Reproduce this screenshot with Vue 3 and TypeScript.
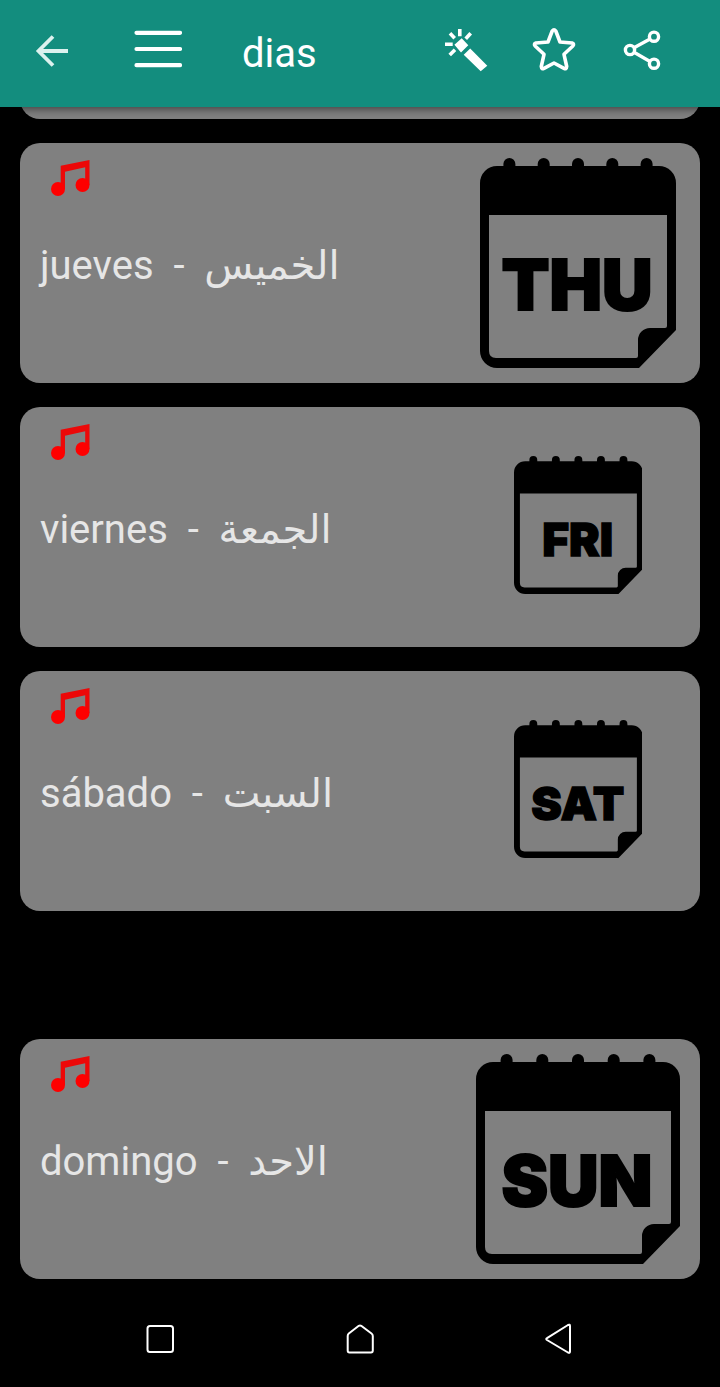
<script setup lang="ts">
interface Day {
  spanish: string
  arabic: string
  label: string
  width: number
  size: 'large' | 'small'
  lastGroup?: boolean
}

const days: Day[] = [
  { spanish: 'jueves', arabic: 'الخميس', label: 'THU', width: 196, size: 'large' },
  { spanish: 'viernes', arabic: 'الجمعة', label: 'FRI', width: 196, size: 'small' },
  { spanish: 'sábado', arabic: 'السبت', label: 'SAT', width: 196, size: 'small' },
  { spanish: 'domingo', arabic: 'الاحد', label: 'SUN', width: 204, size: 'large', lastGroup: true },
]

const rings = [0.15, 0.325, 0.5, 0.675, 0.85]

// Calendar sheet with a folded lower right corner; w is the sheet width.
function sheet(w: number): string {
  const outer = `M17 8H${w - 17}A17 17 0 0 1 ${w} 25V172L${w - 37} 210H17A17 17 0 0 1 0 193V25A17 17 0 0 1 17 8Z`
  const inner = `M9 57V193Q9 200 16 200H${w - 40}Q${w - 38} 200 ${w - 38} 198V182A12 12 0 0 1 ${w - 26} 170H${w - 11}Q${w - 9} 170 ${w - 9} 168V57Z`
  return outer + inner
}
</script>

<template>
  <div class="screen">
    <header class="bar">
      <button type="button" class="icon back" aria-label="Back">
        <svg viewBox="0 0 48 48"><path d="M25 10.500 10.500 25 25 39.500M10.500 25H40" stroke-width="3.800" /></svg>
      </button>
      <button type="button" class="icon menu" aria-label="Menu">
        <svg viewBox="0 0 48 48"><path d="M2.500 6.800H46M2.500 23H46M2.500 39.200H46" stroke-width="4.200" stroke-linecap="round" /></svg>
      </button>
      <h1 class="title">dias</h1>
      <div class="actions">
        <button type="button" class="icon" aria-label="Effects">
          <svg viewBox="0 0 48 48">
            <path d="M17.800 3V10.300M3 18.300H10.700M8 7.300 12.700 12.300M28.700 7.300 23.700 12.700M13 23.700 7.700 29" stroke-width="3.600" />
            <path class="solid" d="M19.700 12.300 26.300 19.300 19 26.600 12.400 18.700ZM28.200 22.500 45.300 39.700 38.700 45.200 21.700 28.700Z" />
          </svg>
        </button>
        <button type="button" class="icon" aria-label="Favourite">
          <svg viewBox="0 0 48 48">
            <path d="M22.200 5Q24 2.600 25.800 5L30 16 42 17Q44.800 18 42.600 20.300L34 28.300 36.700 40.500Q36.500 43.500 34 42.300L24 37 14 42.300Q11.500 43.500 11.300 40.500L14 28.300 5.400 20.300Q3.200 18 6 17L18 16Z" stroke-width="3.600" stroke-linejoin="round" />
          </svg>
        </button>
        <button type="button" class="icon" aria-label="Share">
          <svg viewBox="0 0 48 48">
            <g stroke-width="3.400">
              <circle cx="12" cy="24" r="4.600" />
              <circle cx="36" cy="10.700" r="4.600" />
              <circle cx="36" cy="37.700" r="4.600" />
              <path d="M16 21.700 32 13M16 26.300 32 35.400" />
            </g>
          </svg>
        </button>
      </div>
    </header>

    <main class="list">
      <div class="card-end" aria-hidden="true"></div>
      <article v-for="day in days" :key="day.label" class="card" :class="{ 'card-apart': day.lastGroup }">
        <div class="words">
          <button type="button" class="play" :aria-label="`Play ${day.spanish}`">
            <svg viewBox="0 0 39 36">
              <path d="M9.700 5.800 38.500 0V25H34.200V7.300L14 11.700V29H9.700Z" fill="#ec0808" />
              <circle cx="7" cy="29" r="7" />
              <circle cx="31.500" cy="25" r="7" />
            </svg>
          </button>
          <p class="phrase">{{ day.spanish }}&nbsp; -&nbsp; <bdi lang="ar">{{ day.arabic }}</bdi></p>
        </div>
        <div class="art">
          <svg :class="day.size" :viewBox="`0 0 ${day.width} 210`" role="img" :aria-label="day.label">
            <rect v-for="r in rings" :key="r" :x="r * day.width - 6" y="0" width="12" height="18" rx="6" />
            <path :d="sheet(day.width)" fill-rule="evenodd" />
            <text :x="day.width / 2 - 1" y="152" text-anchor="middle">{{ day.label }}</text>
          </svg>
        </div>
      </article>
    </main>

    <nav class="system" aria-label="System">
      <button type="button" aria-label="Recent apps">
        <svg viewBox="0 0 40 40"><rect x="7.500" y="7" width="25.500" height="26" rx="2.500" /></svg>
      </button>
      <button type="button" aria-label="Home">
        <svg viewBox="0 0 40 40"><path d="M18.800 6.800Q20 6 21.200 6.800L31.500 14.500Q32.800 15.500 32.800 17V31.500Q32.800 33.500 31 33.500H9.500Q7.700 33.500 7.700 31.500V17Q7.700 15.500 8.800 14.500Z" /></svg>
      </button>
      <button type="button" aria-label="Go back">
        <svg viewBox="0 0 40 40"><path d="M7 19.200 28 6Q30 5 30 7V32.500Q30 34.500 28 33.500L7 21Q5.500 20 7 19.200Z" /></svg>
      </button>
    </nav>
  </div>
</template>

<style>
html,
body {
  margin: 0;
  background: #000;
}
</style>

<style scoped>
.screen {
  display: flex;
  flex-direction: column;
  min-height: 100vh;
  background: #000;
  font-family: Roboto, "DejaVu Sans", sans-serif;
}

button {
  display: block;
  padding: 0;
  border: 0;
  background: none;
  color: inherit;
  cursor: pointer;
}

svg {
  display: block;
}

.bar {
  position: relative;
  z-index: 1;
  display: flex;
  align-items: center;
  box-sizing: border-box;
  height: 107px;
  padding: 0 54px 8px 28px;
  background: #138d7e;
  color: #fff;
  box-shadow: 0 2px 8px rgba(0, 0, 0, 0.5);
}

.icon svg {
  width: 48px;
  height: 48px;
  fill: none;
  stroke: currentColor;
}

.icon .solid {
  fill: currentColor;
  stroke: none;
}

.back {
  color: #dcf1ee;
}

.menu {
  margin-left: 58px;
}

.title {
  margin: 0 0 0 60px;
  padding-top: 8px;
  font-size: 40px;
  font-weight: 400;
  line-height: 48px;
}

.actions {
  display: flex;
  gap: 40px;
  margin-left: auto;
}

.list {
  display: flex;
  flex-direction: column;
  gap: 24px;
  padding: 0 20px;
}

.card-end {
  height: 40px;
  margin-top: -28px;
  border-radius: 20px;
  background: #808080;
}

.card {
  display: flex;
  justify-content: space-between;
  height: 240px;
  border-radius: 20px;
  background: #808080;
}

.card-apart {
  margin-top: 104px;
}

.words {
  padding: 17px 0 0 20px;
}

.play {
  margin-left: 11px;
}

.play svg {
  width: 39px;
  height: 36px;
  fill: #fe0000;
}

.phrase {
  margin: 45px 0 0;
  color: #e6e6e6;
  font-size: 40px;
  line-height: 48px;
  white-space: nowrap;
}

.phrase bdi {
  font-family: "DejaVu Sans", sans-serif;
}

.art {
  display: flex;
  align-items: center;
  justify-content: center;
  width: 204px;
  padding-right: 20px;
}

.large {
  height: 210px;
}

.small {
  height: 138px;
  padding-bottom: 4px;
}

.art text {
  font-family: Inter, "Liberation Sans", sans-serif;
  font-size: 70px;
  font-weight: 900;
  stroke: #000;
  stroke-width: 2px;
}

.system {
  display: grid;
  grid-template-columns: repeat(3, 1fr);
  align-items: center;
  justify-items: center;
  height: 96px;
  margin-top: auto;
  padding: 0 60px;
  color: #fff;
}

.system svg {
  width: 40px;
  height: 40px;
  fill: none;
  stroke: currentColor;
  stroke-width: 2px;
  stroke-linejoin: round;
}
</style>
